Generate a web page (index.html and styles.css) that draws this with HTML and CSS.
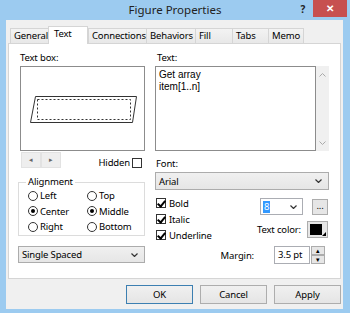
FILE: index.html
```html
<!DOCTYPE html>
<html lang="en">
<head>
    <meta charset="UTF-8">
    <title>Figure Properties</title>
    <link rel="stylesheet" href="styles.css">
</head>
<body>
<div class="window">
    <div class="titlebar">
        <span class="title">Figure Properties</span>
        <div class="controls">
            <span class="help">?</span>
            <span class="close">✕</span>
        </div>
    </div>
    <div class="client">
        <div class="tabs">
            <div class="tab w-general">General</div>
            <div class="tab active w-text">Text</div>
            <div class="tab w-conn">Connections</div>
            <div class="tab w-beh">Behaviors</div>
            <div class="tab w-fill">Fill</div>
            <div class="tab w-tabs">Tabs</div>
            <div class="tab w-memo">Memo</div>
        </div>
        <div class="panel">
            <div class="col left">
                <div class="label">Text box:</div>
                <div class="preview">
                    <svg width="123" height="83" viewBox="0 0 123 83">
                        <polygon points="14.5,29.5 115.5,29.5 111.5,55.5 9.5,55.5" fill="none" stroke="#333" stroke-width="1"/>
                        <rect x="16.5" y="32.5" width="93" height="20" fill="none" stroke="#333" stroke-width="1" stroke-dasharray="2,2"/>
                    </svg>
                </div>
                <div class="nav-row">
                    <div class="nav-btns">
                        <span class="nav-btn">◂</span>
                        <span class="nav-btn">▸</span>
                    </div>
                    <label class="hidden-check">Hidden <span class="check"></span></label>
                </div>
                <fieldset class="group">
                    <legend>Alignment</legend>
                    <div class="radios">
                        <div class="radio-item"><span class="radio"></span>Left</div>
                        <div class="radio-item"><span class="radio"></span>Top</div>
                        <div class="radio-item"><span class="radio on"></span>Center</div>
                        <div class="radio-item"><span class="radio on"></span>Middle</div>
                        <div class="radio-item"><span class="radio"></span>Right</div>
                        <div class="radio-item"><span class="radio"></span>Bottom</div>
                    </div>
                </fieldset>
                <div class="select spacing">
                    <span>Single Spaced</span>
                    <svg class="chev" width="7" height="4" viewBox="0 0 7 4"><path d="M0.5 0.5 L3.5 3.5 L6.5 0.5" fill="none" stroke="#333" stroke-width="1.2"/></svg>
                </div>
            </div>

            <div class="col right">
                <div class="label">Text:</div>
                <div class="textarea-wrap">
                    <div class="textarea">Get array<br>item[1..n]</div>
                    <div class="scrollbar">
                        <svg width="7" height="4" viewBox="0 0 7 4"><path d="M0.5 3.5 L3.5 0.5 L6.5 3.5" fill="none" stroke="#aaa" stroke-width="1"/></svg>
                        <svg width="7" height="4" viewBox="0 0 7 4"><path d="M0.5 0.5 L3.5 3.5 L6.5 0.5" fill="none" stroke="#aaa" stroke-width="1"/></svg>
                    </div>
                </div>
                <div class="label font-label">Font:</div>
                <div class="select font-select">
                    <span>Arial</span>
                    <svg class="chev" width="7" height="4" viewBox="0 0 7 4"><path d="M0.5 0.5 L3.5 3.5 L6.5 0.5" fill="none" stroke="#333" stroke-width="1.2"/></svg>
                </div>
                <div class="style-area">
                    <div class="checks">
                        <div class="check-item"><span class="check on"></span>Bold</div>
                        <div class="check-item"><span class="check on"></span>Italic</div>
                        <div class="check-item"><span class="check on"></span>Underline</div>
                    </div>
                    <div class="size-color">
                        <div class="size-row">
                            <div class="combo">
                                <span class="sel">8</span>
                                <svg class="chev" width="7" height="4" viewBox="0 0 7 4"><path d="M0.5 0.5 L3.5 3.5 L6.5 0.5" fill="none" stroke="#333" stroke-width="1.2"/></svg>
                            </div>
                            <span class="dots">...</span>
                        </div>
                        <div class="color-row">
                            <span>Text color:</span>
                            <span class="swatch"><span class="swatch-fill"></span><span class="corner"></span></span>
                        </div>
                    </div>
                </div>
                <div class="margin-row">
                    <span>Margin:</span>
                    <span class="input">3.5 pt</span>
                    <span class="spin">
                        <span class="spin-btn">▴</span>
                        <span class="spin-btn">▾</span>
                    </span>
                </div>
            </div>
        </div>
        <div class="buttons">
            <span class="btn default">OK</span>
            <span class="btn">Cancel</span>
            <span class="btn">Apply</span>
        </div>
    </div>
</div>
</body>
</html>
```

FILE: styles.css
```css
* {
    margin: 0;
    padding: 0;
    box-sizing: border-box;
}

body {
    width: 350px;
    height: 313px;
    overflow: hidden;
    font-family: "Noto Sans", "Open Sans", sans-serif;
    font-size: 9.5px;
    letter-spacing: -0.15px;
    color: #000;
    background: #9ccbf0;
}

.window {
    width: 350px;
    height: 313px;
    background: #9ccbf0;
    display: flex;
    flex-direction: column;
}

.titlebar {
    height: 20px;
    display: grid;
    grid-template-columns: 1fr auto 1fr;
    align-items: start;
}

.title {
    grid-column: 2;
    font-size: 11.5px;
    letter-spacing: 0;
    color: #222;
    line-height: 20px;
}

.controls {
    grid-column: 3;
    justify-self: end;
    display: flex;
    align-items: flex-start;
}

.help {
    font-weight: bold;
    font-size: 10px;
    color: #222;
    line-height: 18px;
    margin-right: 8px;
}

.close {
    width: 34px;
    height: 17px;
    margin-right: 3px;
    background: #c75050;
    color: #fff;
    font-size: 10px;
    line-height: 17px;
    text-align: center;
    font-weight: bold;
}

.client {
    margin: 0 7px 4px 6px;
    flex: 1;
    background: #f0f0f0;
    padding: 6px 2px 0 2px;
    display: flex;
    flex-direction: column;
}

.tabs {
    display: flex;
    align-items: flex-end;
    height: 17px;
    padding-left: 2px;
    position: relative;
    z-index: 1;
}

.tab {
    height: 15px;
    border: 1px solid #d5d5d5;
    border-bottom: none;
    border-right: none;
    background: linear-gradient(#f3f3f3, #e8e8e8);
    padding-left: 3px;
    line-height: 14px;
    white-space: nowrap;
}

.tab:last-child {
    border-right: 1px solid #d5d5d5;
}

.tab.active {
    height: 18px;
    margin-bottom: -1px;
    background: #fff;
    border-right: 1px solid #d5d5d5;
    padding-left: 5px;
    line-height: 13px;
}

.w-general { width: 38px; }
.w-text { width: 40px; }
.w-conn { width: 58px; }
.w-beh { width: 49px; }
.w-fill { width: 37px; }
.w-tabs { width: 36px; }
.w-memo { width: 36px; }

.panel {
    height: 236px;
    background: #fff;
    border: 1px solid #d5d5d5;
    padding: 7px 11px 0 9px;
    display: flex;
    gap: 10px;
}

.col {
    display: flex;
    flex-direction: column;
}

.left {
    width: 127px;
}

.right {
    width: 174px;
}

.label {
    height: 14px;
    line-height: 14px;
    margin-bottom: 1px;
    padding-left: 2px;
}

.preview {
    margin-left: 2px;
    width: 125px;
    height: 85px;
    border: 1px solid #8c8c8c;
}

.preview svg {
    display: block;
}

.nav-row {
    height: 17px;
    margin-top: 1px;
    display: flex;
    justify-content: space-between;
    align-items: center;
}

.nav-btns {
    display: flex;
    margin-left: 3px;
    align-self: flex-start;
}

.nav-btn {
    width: 20px;
    height: 16px;
    background: #eeeeee;
    border: 1px solid #e2e2e2;
    color: #666;
    font-size: 7px;
    line-height: 14px;
    text-align: center;
}

.hidden-check {
    display: flex;
    align-items: center;
    gap: 2px;
    margin-right: 3px;
    margin-top: 4px;
}

.check {
    width: 10px;
    height: 10px;
    border: 1px solid #333;
    background: #fff;
    position: relative;
    flex-shrink: 0;
}

.check.on::after {
    content: "";
    position: absolute;
    left: 2px;
    top: 0px;
    width: 3px;
    height: 6px;
    border: solid #000;
    border-width: 0 2px 2px 0;
    transform: rotate(40deg);
}

.group {
    margin-top: 7px;
    width: 127px;
    height: 60px;
    border: 1px solid #dcdcdc;
    padding: 0 0 0 9px;
}

.group legend {
    padding: 0 2px;
    margin-left: -2px;
    line-height: 12px;
}

.radios {
    display: grid;
    grid-template-columns: 59px 1fr;
    row-gap: 2px;
    margin-top: 1px;
}

.radio-item {
    display: flex;
    align-items: center;
    gap: 2px;
    height: 13.5px;
}

.radio {
    width: 10px;
    height: 10px;
    border: 1px solid #333;
    border-radius: 50%;
    background: #fff;
    position: relative;
}

.radio.on::after {
    content: "";
    position: absolute;
    left: 2px;
    top: 2px;
    width: 4px;
    height: 4px;
    border-radius: 50%;
    background: #000;
}

.select {
    height: 18px;
    border: 1px solid #acacac;
    background: linear-gradient(#f0f0f0, #e6e6e6);
    display: flex;
    justify-content: space-between;
    align-items: center;
    padding: 0 6px 0 3px;
}

.spacing {
    margin-top: 10px;
    height: 17px;
}

.textarea-wrap {
    display: flex;
    height: 85px;
}

.textarea {
    width: 161px;
    height: 85px;
    border: 1px solid #8c8c8c;
    padding: 2px 3px;
    font-family: "Liberation Sans", Arial, sans-serif;
    font-size: 10px;
    letter-spacing: 0;
    line-height: 12px;
}

.scrollbar {
    width: 13px;
    height: 85px;
    background: #f0f0f0;
    display: flex;
    flex-direction: column;
    justify-content: space-between;
    align-items: center;
    padding: 7px 0 6px;
}

.scrollbar svg {
    display: block;
}

.font-label {
    margin-top: 6px;
    padding-left: 1px;
}

.style-area {
    display: flex;
    justify-content: space-between;
    margin-top: 5px;
    height: 48px;
}

.checks {
    display: flex;
    flex-direction: column;
    gap: 4px;
    padding-left: 1px;
    padding-top: 2px;
}

.check-item {
    display: flex;
    align-items: center;
    gap: 3px;
    height: 12px;
}

.size-color {
    display: flex;
    flex-direction: column;
    align-items: flex-end;
    gap: 6px;
    padding-right: 1px;
}

.size-row {
    display: flex;
    align-items: center;
    gap: 9px;
    margin-top: 3px;
}

.combo {
    width: 43px;
    height: 17px;
    border: 1px solid #abadb3;
    background: #fff;
    display: flex;
    justify-content: space-between;
    align-items: center;
    padding: 0 5px 0 2px;
}

.sel {
    background: #3399ff;
    color: #fff;
    padding: 0 1px;
    line-height: 12px;
}

.dots {
    width: 16px;
    height: 16px;
    border: 1px solid #acacac;
    background: #e6e6e6;
    text-align: center;
    line-height: 12px;
}

.color-row {
    display: flex;
    align-items: center;
    gap: 6px;
}

.swatch {
    width: 21px;
    height: 17px;
    border: 1px solid #acacac;
    background: #e6e6e6;
    position: relative;
}

.swatch-fill {
    position: absolute;
    left: 2px;
    top: 2px;
    width: 12px;
    height: 11px;
    background: #000;
}

.corner {
    position: absolute;
    right: 1px;
    bottom: 1px;
    width: 0;
    height: 0;
    border-left: 4px solid transparent;
    border-bottom: 4px solid #000;
}

.margin-row {
    margin-top: 3px;
    display: flex;
    justify-content: flex-end;
    align-items: center;
    padding-right: 4px;
}

.margin-row > span:first-child {
    margin-right: 20px;
}

.input {
    width: 36px;
    height: 18px;
    border: 1px solid #abadb3;
    padding-left: 3px;
    line-height: 16px;
}

.spin {
    display: flex;
    flex-direction: column;
    margin-left: 1px;
}

.spin-btn {
    width: 14px;
    height: 9px;
    border: 1px solid #acacac;
    background: #e6e6e6;
    font-size: 7px;
    line-height: 7px;
    text-align: center;
}

.buttons {
    display: flex;
    justify-content: flex-end;
    gap: 7px;
    margin-top: 6px;
}

.btn {
    width: 67px;
    height: 19px;
    border: 1px solid #adadad;
    background: linear-gradient(#f0f0f0, #e5e5e5);
    text-align: center;
    line-height: 17px;
}

.btn.default {
    border-color: #3c7fb1;
}
```
